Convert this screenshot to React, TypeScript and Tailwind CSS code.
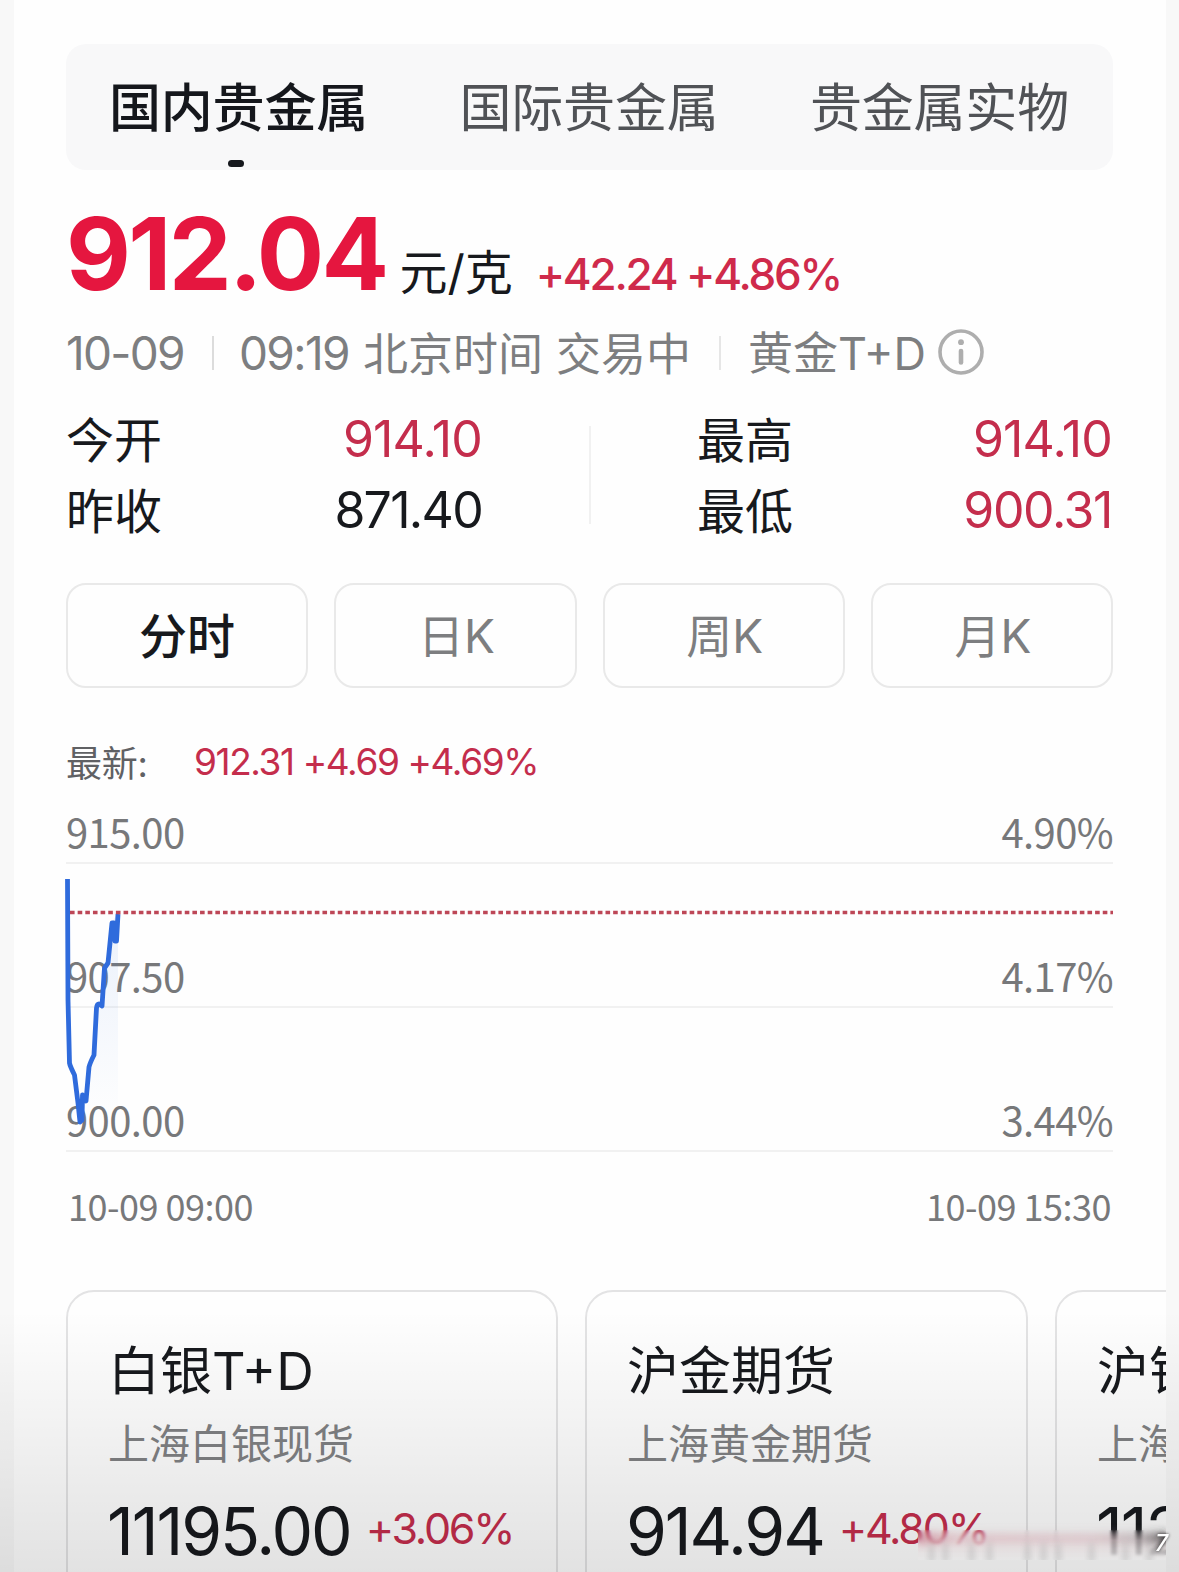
import { clsx } from "clsx";

const tabs = ["国内贵金属", "国际贵金属", "贵金属实物"];

const periods = ["分时", "日K", "周K", "月K"];

const axis = [
  { price: "915.00", percent: "4.90%" },
  { price: "907.50", percent: "4.17%" },
  { price: "900.00", percent: "3.44%" },
];

const cards = [
  { name: "白银T+D", desc: "上海白银现货", price: "11195.00", change: "+3.06%", width: "w-[492px]" },
  { name: "沪金期货", desc: "上海黄金期货", price: "914.94", change: "+4.80%", width: "w-[443px]" },
  { name: "沪银期货", desc: "上海白银期货", price: "11206.00", change: "+3.12%", width: "w-[492px]" },
];

function Tabs() {
  return (
    <nav className="flex h-[126px] justify-between rounded-[20px] bg-[#f8f8f9] pr-[44px] pl-[43px]">
      {tabs.map((tab, i) => (
        <button
          key={tab}
          type="button"
          className={clsx(
            "relative h-[126px] pt-[4px] text-[52px] leading-[122px] tracking-[-0.2px]",
            i === 0 ? "font-medium text-[#15171c]" : "text-[#505256]"
          )}
        >
          {tab}
          {i === 0 && <span className="absolute bottom-[3px] left-[119px] h-[7px] w-4 rounded-full bg-[#15171c]" />}
        </button>
      ))}
    </nav>
  );
}

function InfoIcon() {
  return (
    <svg viewBox="0 0 46 46" className="-mt-[2px] ml-[12px] size-[46px]" fill="none" stroke="#aeaeae">
      <circle cx="23" cy="23" r="21" strokeWidth="3.6" />
      <path d="M23 22v11.500" strokeWidth="4.600" strokeLinecap="round" />
      <circle cx="23" cy="13.200" r="2.900" fill="#aeaeae" stroke="none" />
    </svg>
  );
}

function Quote({ label, value, className }: { label: string; value: string; className: string }) {
  return (
    <div className="flex h-[71px] items-center justify-between">
      <span className="pt-[4px] text-[48px] text-[#17191d]">{label}</span>
      <span className={clsx("pt-[1px] pr-[1px] text-[50px]", className)}>{value}</span>
    </div>
  );
}

function Chart() {
  return (
    <section className="relative font-['Noto_Sans_CJK_SC',sans-serif] text-[#77787a]">
      {axis.map((row) => (
        <div
          key={row.price}
          className="flex h-36 items-end justify-between border-b-2 border-[#f1f1f1] pb-[7px] text-[40px] leading-[48px] tracking-[-0.6px]"
        >
          <span>{row.price}</span>
          <span>{row.percent}</span>
        </div>
      ))}
      <svg viewBox="0 0 1047 432" className="absolute top-0 left-0 h-[432px] w-[1047px] overflow-visible" fill="none">
        <defs>
          <linearGradient id="area" x1="0" y1="0" x2="0" y2="1">
            <stop offset="0" stopColor="#3b78e0" stopOpacity="0.1" />
            <stop offset="1" stopColor="#3b78e0" stopOpacity="0" />
          </linearGradient>
        </defs>
        <path d="M20 402 L23 347 L28 335 L31 284 L36 286 L39 247 L46 202 L52 193 V402 Z" fill="url(#area)" />
        <path
          d="M1.500 159 L2 280 L3.500 343 Q4 346 8.500 355 L12 383 L14 402 L16 400 L16.500 375 L20 381 L23 347 Q24 343 28 335 L30.500 288 Q31 284 33 284 L36 286 L38.500 248 L42 243 L46 203 L48 203 L49 221 L50.500 221 L52 194"
          stroke="#2f6bdc"
          strokeWidth="4.800"
          strokeLinejoin="round"
        />
        <path d="M4 192.500H1047" stroke="#bd4757" strokeWidth="3.600" strokeDasharray="4.600 3.050" />
      </svg>
      <div className="flex justify-between px-[2px] pt-[29px] text-[36px] leading-[48px] tracking-[-0.5px]">
        <span>10-09 09:00</span>
        <span>10-09 15:30</span>
      </div>
    </section>
  );
}

// frosted strip over the lower right corner, with the streaks it leaves
function Smear() {
  const streaks = [10, 24, 50, 68, 106, 122, 137, 170, 204, 228];
  return (
    <div className="pointer-events-none absolute top-[1522px] left-[918px] h-[38px] w-[248px] overflow-hidden">
      <div className="absolute inset-x-0 top-[8px] bottom-0 bg-linear-to-b from-[#e6dadc]/0 via-[#e3d6d8]/70 via-35% to-[#e6e6e6]/85 backdrop-blur-[1.5px]" />
      <svg viewBox="0 0 248 38" className="absolute inset-0 h-full w-full">
        <defs>
          <filter id="soft" x="-50%" y="-100%" width="200%" height="300%">
            <feGaussianBlur stdDeviation="2.5 4" />
          </filter>
          <linearGradient id="band" x1="0" x2="1">
            <stop offset="0" stopColor="#c0506a" stopOpacity="0.6" />
            <stop offset="0.15" stopColor="#d59aa6" stopOpacity="0.35" />
            <stop offset="0.7" stopColor="#c99ba5" stopOpacity="0.3" />
            <stop offset="0.88" stopColor="#8a8084" stopOpacity="0.4" />
            <stop offset="1" stopColor="#222" stopOpacity="0.8" />
          </linearGradient>
        </defs>
        <rect x="0" y="11" width="248" height="10" fill="url(#band)" filter="url(#soft)" />
        {streaks.map((x) => (
          <rect key={x} x={x} y="22" width="7" height="20" fill="#999" opacity="0.25" filter="url(#soft)" />
        ))}
      </svg>
    </div>
  );
}

export default function App() {
  return (
    <div className="relative h-[1572px] w-[1179px] overflow-hidden bg-[#f8f8f8] pr-[13px] pl-[14px] font-[Inter,'Noto_Sans_CJK_SC',sans-serif]">
      <main className="h-full overflow-hidden bg-[#fefefe] pt-11 pl-[52px]">
        <div className="w-[1047px]">
          <Tabs />

          <div className="mt-[29px] flex h-[110px] items-baseline leading-[110px] whitespace-nowrap">
            <span className="text-[100px] font-bold tracking-[-2.7px] text-[#e5163f]">912.04</span>
            <span className="ml-[13px] text-[48px] text-[#17191d]">元/克</span>
            <span className="ml-[23px] text-[44px] font-medium tracking-[-2.2px] text-[#cf2a4b]">+42.24 +4.86%</span>
          </div>

          <div className="mt-[19px] flex h-[50px] items-center text-[45px] leading-[50px] whitespace-nowrap text-[#7d7e80]">
            <span className="text-[46px] tracking-[-1.7px]">10-09</span>
            <span className="mr-[25px] ml-[28px] h-[34px] w-[2px] bg-[#dcdcdc]" />
            <span className="text-[46px] tracking-[-1.6px]">09:19</span>
            <span className="ml-[14px] pt-[3px]">北京时间</span>
            <span className="ml-[13px] pt-[3px]">交易中</span>
            <span className="mr-[27px] ml-[28px] h-[34px] w-[2px] bg-[#e6e6e6]" />
            <span className="pt-[2px]">黄金T+D</span>
            <InfoIcon />
          </div>

          <div className="mt-[25px] flex">
            <div className="w-[417px]">
              <Quote label="今开" value="914.10" className="tracking-[-0.8px] text-[#c42d4c]" />
              <Quote label="昨收" value="871.40" className="tracking-[-1.7px] text-[#17191d]" />
            </div>
            <div className="mt-[23px] mr-[106px] ml-[106px] h-[98px] w-[2px] bg-[#f1f1f1]" />
            <div className="flex-1">
              <Quote label="最高" value="914.10" className="tracking-[-0.8px] text-[#c42d4c]" />
              <Quote label="最低" value="900.31" className="tracking-[-1.4px] text-[#c42d4c]" />
            </div>
          </div>

          <div className="mt-[38px] grid grid-cols-4 gap-[26px]">
            {periods.map((period, i) => (
              <button
                key={period}
                type="button"
                className={clsx(
                  "h-[105px] rounded-[20px] border-2 border-[#e9e9e9] leading-[100px]",
                  i === 0 ? "pt-[2px] text-[48px] font-medium text-[#17191d]" : "pl-[2px] text-[46px] text-[#7d7e80]"
                )}
              >
                {period}
              </button>
            ))}
          </div>

          <div className="mt-[49px] flex h-[50px] items-center text-[37px] leading-[50px]">
            <span className="w-[128px] pt-[3px] text-[36px] tracking-[-0.3px] text-[#606164]">最新:</span>
            <span className="tracking-[-1.4px] text-[#c42d4c]">912.31 +4.69 +4.69%</span>
          </div>

          <div className="-mt-[67px]">
            <Chart />
          </div>
        </div>

        <div className="mt-[61px] flex gap-[27px]">
          {cards.map((card) => (
            <article
              key={card.name}
              className={clsx(
                "h-[360px] shrink-0 rounded-[28px] border-2 border-[#e3e3e4] pt-[47px] pl-[40px] whitespace-nowrap",
                card.width
              )}
            >
              <h2 className="text-[52px] leading-[66px] text-[#17191d]">{card.name}</h2>
              <p className="mt-[12px] text-[41px] leading-[54px] text-[#808183]">{card.desc}</p>
              <div className="mt-[20px] -ml-[1px] flex h-[80px] items-baseline leading-[80px]">
                <span className="text-[66px] tracking-[-2.1px] text-[#17191d]">{card.price}</span>
                <span className="relative -top-[11px] ml-[15px] text-[43px] tracking-[-2.2px] text-[#c42d4c]">
                  {card.change}
                </span>
              </div>
            </article>
          ))}
        </div>
      </main>

      <div className="pointer-events-none absolute inset-x-0 bottom-0 h-[262px] bg-linear-to-b from-black/0 to-black/11" />
      <Smear />
      <span className="absolute top-[1526px] left-[1155px] text-[23px] font-medium text-white italic [text-shadow:0_0_3px_#333]">
        7
      </span>
    </div>
  );
}
